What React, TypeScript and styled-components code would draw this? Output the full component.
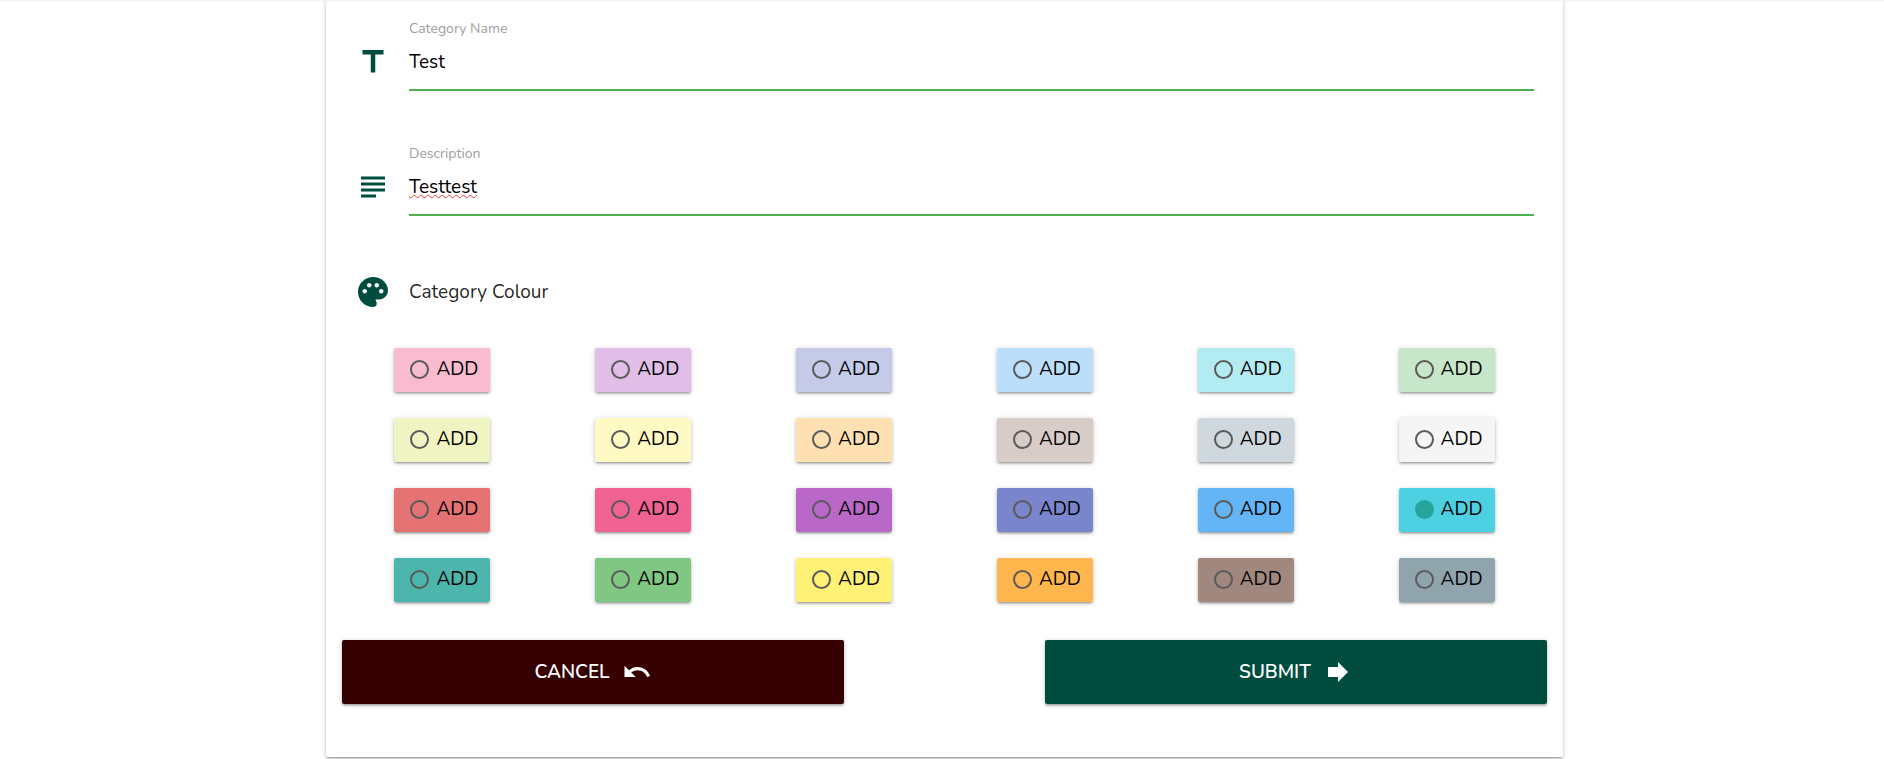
import React, { useState } from "react";
import styled, { createGlobalStyle } from "styled-components";
import { MdForward, MdPalette, MdSubject, MdTitle, MdUndo } from "react-icons/md";

const GlobalStyle = createGlobalStyle`
  *, *::before, *::after {
    box-sizing: border-box;
  }
  body {
    margin: 0;
    background: #fff;
    color: rgba(0, 0, 0, 0.87);
    font-family: Nunito, Lato, "Open Sans", sans-serif;
    font-size: 19px;
    line-height: 28px;
  }
`;

const raised = `
  box-shadow:
    0 2px 2px 0 rgba(0, 0, 0, 0.14),
    0 3px 1px -2px rgba(0, 0, 0, 0.12),
    0 1px 5px 0 rgba(0, 0, 0, 0.2);
`;

const Page = styled.main`
  display: grid;
  grid-template-columns: 326fr 1237fr 321fr;
  padding-bottom: 2px;
  background: linear-gradient(#f5f5f5, #fafafa) top / 100% 2px no-repeat;
`;

const Card = styled.form`
  grid-column: 2;
  display: flex;
  flex-direction: column;
  gap: 38px;
  padding: 18px 16px 53px;
  border-radius: 0 0 2px 2px;
  ${raised}
`;

const Fields = styled.div`
  display: flex;
  flex-direction: column;
  gap: 52px;
  padding: 0 13px;
`;

const Field = styled.div`
  display: flex;
  gap: 18px;
`;

const Icon = styled.span<{ $drop?: number }>`
  flex: none;
  display: flex;
  margin-top: ${(p) => p.$drop ?? 0}px;
  color: #004d40;
  font-size: 36px;
`;

const FieldBody = styled.div`
  flex: 1;
  display: flex;
  flex-direction: column;
  padding-bottom: 4px;
  border-bottom: 2px solid #4caf50;
`;

const Label = styled.label`
  color: #9e9e9e;
  font-size: 14px;
  line-height: 21px;
`;

const Input = styled.input<{ $misspelt?: boolean }>`
  width: 100%;
  height: 46px;
  padding: 0;
  border: 0;
  outline: 0;
  background: transparent;
  color: #000;
  font: inherit;
  text-decoration: ${(p) => (p.$misspelt ? "underline wavy #e53935 1px" : "none")};
  text-decoration-skip-ink: none;
`;

const Heading = styled.div`
  display: flex;
  align-items: center;
  gap: 18px;
  padding-top: 6px;
`;

const Title = styled.h2`
  margin: 0;
  font-size: 19px;
  font-weight: 400;
  line-height: 28px;
`;

const Palette = styled.div`
  display: grid;
  grid-template-columns: repeat(6, 1fr);
  row-gap: 26px;
  justify-items: center;
`;

const Swatch = styled.label<{ $color: string }>`
  display: flex;
  align-items: center;
  gap: 7px;
  width: 96px;
  height: 44px;
  padding: 0 0 2px 16px;
  border-radius: 2px;
  background: ${(p) => p.$color};
  color: #000;
  cursor: pointer;
  ${raised}
`;

const Radio = styled.input`
  appearance: none;
  flex: none;
  width: 19px;
  height: 19px;
  margin: 0;
  border: 2px solid #5a5a5a;
  border-radius: 50%;

  &:checked {
    border-color: #26a69a;
    background: #26a69a;
  }
`;

const Actions = styled.div`
  display: grid;
  grid-template-columns: 5fr 5fr;
  column-gap: 16.6667%;
`;

const Button = styled.button<{ $color: string }>`
  display: flex;
  align-items: center;
  justify-content: center;
  gap: 12px;
  height: 64px;
  padding: 0;
  border: 0;
  border-radius: 2px;
  background: ${(p) => p.$color};
  color: #fff;
  font: inherit;
  font-weight: 600;
  cursor: pointer;
  ${raised}

  svg {
    font-size: 30px;
  }
`;

const colours = [
  "#f8bbd0", "#e1bee7", "#c5cae9", "#bbdefb", "#b2ebf2", "#c8e6c9",
  "#f0f4c3", "#fff9c4", "#ffe0b2", "#d7ccc8", "#cfd8dc", "#f5f5f5",
  "#e57373", "#f06292", "#ba68c8", "#7986cb", "#64b5f6", "#4dd0e1",
  "#4db6ac", "#81c784", "#fff176", "#ffb74d", "#a1887f", "#90a4ae",
];

export default function App() {
  const [name, setName] = useState("Test");
  const [description, setDescription] = useState("Testtest");
  const [colour, setColour] = useState("#4dd0e1");

  return (
    <>
      <GlobalStyle />
      <Page>
        <Card onSubmit={(e) => e.preventDefault()}>
          <Fields>
            <Field>
              <Icon $drop={26}><MdTitle /></Icon>
              <FieldBody>
                <Label htmlFor="name">Category Name</Label>
                <Input id="name" value={name} onChange={(e) => setName(e.target.value)} />
              </FieldBody>
            </Field>
            <Field>
              <Icon $drop={26}><MdSubject /></Icon>
              <FieldBody>
                <Label htmlFor="description">Description</Label>
                <Input
                  id="description"
                  $misspelt={description === "Testtest"}
                  value={description}
                  onChange={(e) => setDescription(e.target.value)}
                />
              </FieldBody>
            </Field>
            <Heading>
              <Icon><MdPalette /></Icon>
              <Title id="colour-title">Category Colour</Title>
            </Heading>
          </Fields>
          <Palette role="radiogroup" aria-labelledby="colour-title">
            {colours.map((c) => (
              <Swatch key={c} $color={c}>
                <Radio
                  type="radio"
                  name="colour"
                  value={c}
                  checked={colour === c}
                  onChange={() => setColour(c)}
                />
                ADD
              </Swatch>
            ))}
          </Palette>
          <Actions>
            <Button type="button" $color="#370000">CANCEL <MdUndo /></Button>
            <Button type="submit" $color="#004d40">SUBMIT <MdForward /></Button>
          </Actions>
        </Card>
      </Page>
    </>
  );
}
